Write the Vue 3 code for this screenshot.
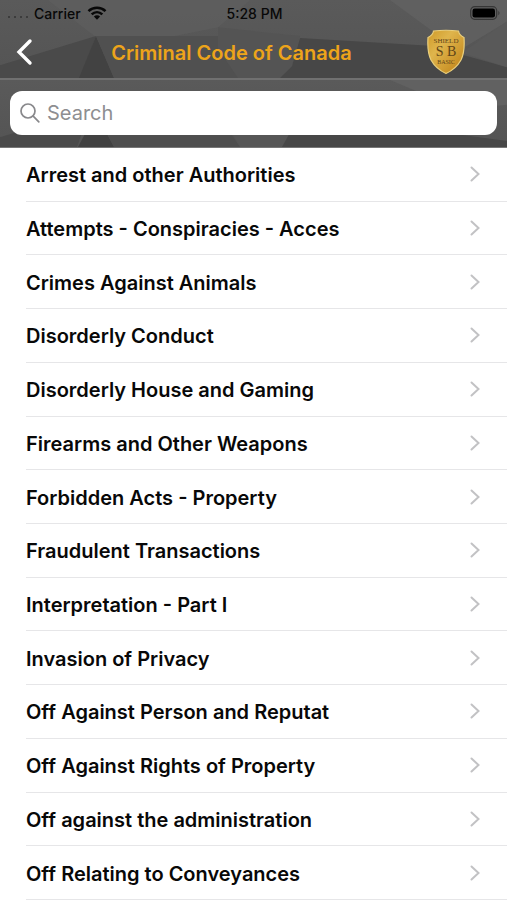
<script setup>
import { ref, computed } from 'vue'

const query = ref('')
const sections = [
  'Arrest and other Authorities',
  'Attempts - Conspiracies - Acces',
  'Crimes Against Animals',
  'Disorderly Conduct',
  'Disorderly House and Gaming',
  'Firearms and Other Weapons',
  'Forbidden Acts - Property',
  'Fraudulent Transactions',
  'Interpretation - Part I',
  'Invasion of Privacy',
  'Off Against Person and Reputat',
  'Off Against Rights of Property',
  'Off against the administration',
  'Off Relating to Conveyances',
]
const visible = computed(() =>
  sections.filter((s) => s.toLowerCase().includes(query.value.trim().toLowerCase()))
)
</script>

<template>
  <div class="screen">
    <header class="top">
      <svg class="facets" viewBox="0 0 507 80" preserveAspectRatio="none" aria-hidden="true">
        <defs>
          <linearGradient id="shade" x1="0" y1="0" x2="0" y2="1">
            <stop offset="0" stop-color="#5a5a5a" />
            <stop offset="1" stop-color="#545454" />
          </linearGradient>
        </defs>
        <rect width="507" height="80" fill="url(#shade)" />
        <path d="M48 0H250L218 28L170 38H96Z" fill="#606060" opacity=".55" />
        <path d="M0 67L96 37L80 80H0Z" fill="#4a4a4a" />
        <path d="M96 37L114 80H79Z" fill="#424242" />
        <path d="M96 37H218L245 80H114Z" fill="#505050" />
        <path d="M218 28L300 37L292 68L280 80H238L218 50Z" fill="#545454" />
        <path d="M300 39L430 47L507 69V80H280L292 68Z" fill="#474747" />
        <path d="M390 0H507V22L462 50L430 30Z" fill="#646464" opacity=".65" />
        <path d="M507 22V69L462 54Z" fill="#595959" />
      </svg>
      <div class="status">
        <div class="carrier">
          <span class="dots"><i></i><i></i><i></i><i></i></span>
          <span>Carrier</span>
          <svg width="20" height="14" viewBox="0 0 20 14" aria-hidden="true">
            <g fill="none" stroke="#080808" stroke-width="2.6">
              <path d="M1.5 5.1C6.2.6 13.8.6 18.5 5.1" />
              <path d="M4.7 8.4C7.8 5.5 12.2 5.5 15.3 8.4" />
            </g>
            <path d="M6.9 10.6C8.6 8.9 11.4 8.9 13.1 10.6L10 13.8Z" fill="#080808" />
          </svg>
        </div>
        <time>5:28 PM</time>
        <svg class="battery" width="31" height="14" viewBox="0 0 31 14" aria-hidden="true">
          <rect x=".7" y=".7" width="26" height="12.6" rx="4" fill="none" stroke="#363636" stroke-width="1.2" />
          <rect x="2.5" y="2.5" width="22.5" height="9" rx="2.2" fill="#000" />
          <path d="M28.4 4.7Q30.6 7 28.4 9.3Z" fill="#363636" />
        </svg>
      </div>
      <div class="nav">
        <button class="back" type="button" aria-label="Back">
          <svg width="18" height="28" viewBox="0 0 18 28" aria-hidden="true">
            <path d="M14 3L3 14L14 25" fill="none" stroke="#fff" stroke-width="3.4" stroke-linecap="round" />
          </svg>
        </button>
        <h1>Criminal Code of Canada</h1>
        <svg class="badge" width="38" height="46" viewBox="0 0 38 46" role="img" aria-label="Shield Basic">
          <defs>
            <linearGradient id="gold" x1="0" y1="0" x2="1" y2="1">
              <stop offset="0" stop-color="#cf9a28" />
              <stop offset=".35" stop-color="#dfb54c" />
              <stop offset=".6" stop-color="#d3a036" />
              <stop offset="1" stop-color="#bc7f14" />
            </linearGradient>
          </defs>
          <path d="M6.5 2Q19 .5 31.5 2Q32 6 37 8.5Q38 23 34 31Q29 40 19 44.5Q9 40 4 31Q0 23 1 8.5Q6 6 6.5 2Z" fill="url(#gold)" stroke="#e9cf7d" stroke-width="1.2" />
          <g fill="#5f4518" font-family="'Liberation Serif', serif" text-anchor="middle">
            <text x="19" y="14" font-size="7">SHIELD</text>
            <text x="19" y="27" font-size="14">S B</text>
            <text x="19" y="35" font-size="6">BASIC</text>
          </g>
        </svg>
      </div>
    </header>

    <form class="search" role="search" @submit.prevent>
      <svg class="facets" viewBox="0 0 507 68" preserveAspectRatio="none" aria-hidden="true">
        <rect width="507" height="68" fill="url(#shade)" />
        <path d="M0 58L90 30L77 68H0Z" fill="#4a4a4a" />
        <path d="M96 34L114 68H78Z" fill="#414141" />
        <path d="M108 56H232L240 68H114Z" fill="#4e4e4e" />
        <path d="M230 50H292L282 68H240Z" fill="#565656" />
        <path d="M292 50H420L507 62V68H282Z" fill="#474747" />
        <path d="M390 0H507V25L460 30Z" fill="#616161" />
      </svg>
      <label class="field">
        <svg width="20" height="20" viewBox="0 0 20 20" aria-hidden="true">
          <g fill="none" stroke="#88888b" stroke-width="1.7" stroke-linecap="round">
            <circle cx="8" cy="8" r="7" />
            <path d="M13.2 13.2L18.8 18.8" />
          </g>
        </svg>
        <input v-model="query" type="search" placeholder="Search" aria-label="Search" />
      </label>
    </form>

    <ul class="list">
      <li v-for="name in visible" :key="name">
        <a href="#">
          <span>{{ name }}</span>
          <svg width="10" height="16" viewBox="0 0 10 16" aria-hidden="true">
            <path d="M1.5 1.5L8.5 8L1.5 14.5" fill="none" stroke="#c2c2c4" stroke-width="2" stroke-linecap="round" />
          </svg>
        </a>
      </li>
    </ul>
  </div>
</template>

<style>
body {
  margin: 0;
  background: #fff;
}
</style>

<style scoped>
.screen {
  display: flex;
  flex-direction: column;
  min-height: 100vh;
  font-family: Inter, 'Liberation Sans', sans-serif;
  color: #080808;
}
.top,
.search {
  position: relative;
  isolation: isolate;
}
.facets {
  position: absolute;
  inset: 0;
  z-index: -1;
  width: 100%;
  height: 100%;
}
.top {
  border-bottom: 2px solid #707070;
}
.status {
  display: grid;
  grid-template-columns: 1fr auto 1fr;
  align-items: center;
  height: 26px;
  padding: 0 6px 0 8px;
  font-size: 14px;
  font-weight: 500;
}
.carrier {
  display: flex;
  align-items: center;
  gap: 6px;
}
.dots {
  display: flex;
  gap: 4px;
  padding-top: 8px;
}
.dots i {
  width: 2px;
  height: 2px;
  border-radius: 50%;
  background: #333;
}
.battery {
  justify-self: end;
}
.nav {
  display: grid;
  grid-template-columns: 80px 1fr 80px;
  align-items: center;
  height: 52px;
}
.back {
  display: flex;
  align-items: center;
  height: 44px;
  padding: 0 16px;
  border: 0;
  background: none;
}
h1 {
  margin: 0 0 0 -44px;
  padding-top: 2px;
  font-size: 20px;
  line-height: 24px;
  font-weight: 600;
  color: #eda41a;
  text-align: center;
  white-space: nowrap;
}
.search {
  padding: 11px 10px 12px;
  border-bottom: 1px solid #777;
}
.field {
  display: flex;
  align-items: center;
  gap: 7px;
  height: 44px;
  padding: 0 10px;
  border-radius: 12px;
  background: #fff;
}
.field input {
  flex: 1;
  min-width: 0;
  padding: 0;
  border: 0;
  outline: 0;
  background: none;
  font: 400 20px/24px Inter, 'Liberation Sans', sans-serif;
  color: #080808;
  appearance: none;
}
.field input::placeholder {
  color: #8e8e91;
  opacity: 1;
}
.list {
  flex: 1;
  display: grid;
  grid-auto-rows: minmax(52px, 1fr);
  margin: 0;
  padding: 0 0 0 26px;
  list-style: none;
}
.list li {
  display: flex;
  border-bottom: 1px solid #e6e6e8;
}
.list a {
  flex: 1;
  display: flex;
  align-items: center;
  justify-content: space-between;
  padding-right: 27px;
  font-size: 20px;
  line-height: 24px;
  font-weight: 600;
  color: #080808;
  text-decoration: none;
}
.list span {
  padding-top: 2px;
}
</style>
